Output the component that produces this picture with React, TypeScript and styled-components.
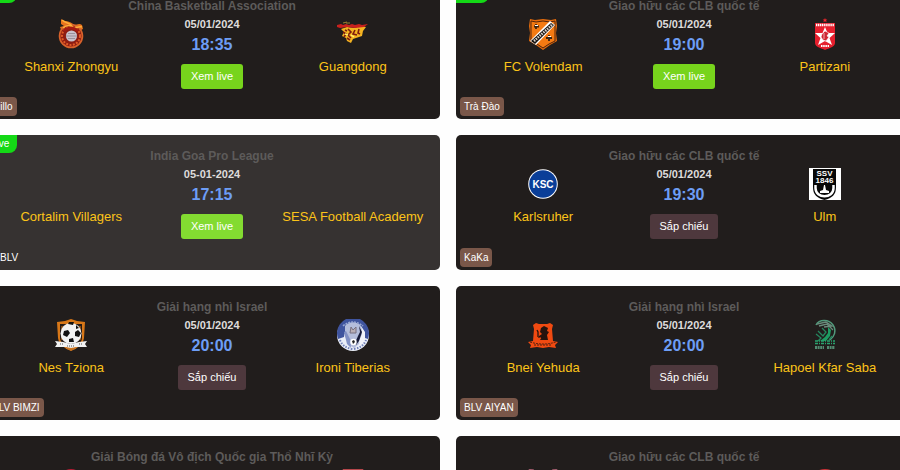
import React from "react";
import styled, { createGlobalStyle } from "styled-components";

const GlobalStyle = createGlobalStyle`
  *, *::before, *::after { box-sizing: border-box; }
  html, body { margin: 0; background: #fefefe; overflow: hidden; }
  body { font-family: "Liberation Sans", Arial, sans-serif; }
`;

const Viewport = styled.main`
  height: 100vh;
  overflow: hidden;
`;

const MatchGrid = styled.div`
  display: grid;
  grid-template-columns: repeat(2, minmax(0, 1fr));
  gap: 16px;
  margin: -15px -12px 0 -16px;
`;

const Card = styled.article<{ $active?: boolean }>`
  position: relative;
  min-height: ${(p) => (p.$active ? "135px" : "134px")};
  padding: 12px 8px;
  border-radius: 5px;
  overflow: hidden;
  background: ${(p) => (p.$active ? "#363231" : "#211d1c")};
`;

const LeagueTitle = styled.h2`
  margin: 0;
  font-size: 12px;
  line-height: 18px;
  font-weight: 700;
  text-align: center;
  color: #5d5b5a;
`;

const MatchRow = styled.div`
  display: grid;
  grid-template-columns: 36fr 28fr 36fr;
`;

const Team = styled.div`
  display: flex;
  flex-direction: column;
  align-items: center;
  gap: 8px;
  padding-top: 3px;
`;

const Crest = styled.svg`
  display: block;
  width: 32px;
  height: 32px;
`;

const TeamName = styled.span`
  font-size: 13px;
  line-height: 18px;
  white-space: nowrap;
  color: #fcc419;
`;

const Schedule = styled.div`
  display: flex;
  flex-direction: column;
  align-items: center;
`;

const MatchDate = styled.time`
  font-size: 11px;
  line-height: 18px;
  font-weight: 700;
  color: #dedcdb;
`;

const MatchTime = styled.time`
  font-size: 16px;
  line-height: 23px;
  font-weight: 700;
  color: #6d9df5;
`;

const WatchButton = styled.button<{ $live: boolean; $active?: boolean }>`
  height: 25px;
  margin: 8px 0 0;
  padding: 0 10px;
  border: 0;
  border-radius: 3px;
  font-family: inherit;
  font-size: 11px;
  line-height: 25px;
  white-space: nowrap;
  color: #fff;
  background: ${(p) => (!p.$live ? "#4e383d" : p.$active ? "#83db31" : "#77d41c")};
  cursor: pointer;
`;

const LiveTag = styled.span`
  position: absolute;
  top: 0;
  left: 0;
  padding: 0 8px 0 7px;
  border-radius: 0 0 8px 0;
  font-size: 10px;
  line-height: 18px;
  color: #fff;
  background: #14d916;
`;

const Caster = styled.span<{ $plain?: boolean }>`
  position: absolute;
  left: 4px;
  bottom: 3px;
  padding: 0 4px 0 ${(p) => (p.$plain ? "12px" : "4px")};
  border-radius: 4px;
  font-size: 10px;
  line-height: 19px;
  color: #fff;
  background: ${(p) => (p.$plain ? "transparent" : "#7a5749")};
`;

type CrestName =
  | "shanxi" | "guangdong" | "volendam" | "partizani" | "karlsruher" | "ulm"
  | "tziona" | "tiberias" | "yehuda" | "saba" | "redDisc" | "redBox" | "horns" | "redRing";

const crests: Record<CrestName, React.ReactNode> = {
  shanxi: (
    <>
      <path d="M6 1c3 3 9 1 13 6 3 0 5-2 8 0l1 4-6 3H7L5 9l4-1-3-2z" fill="#e8731d" />
      <circle cx="16" cy="18" r="12.3" fill="#d8622b" />
      <circle cx="16" cy="18" r="10.6" fill="#8e1d12" />
      <circle cx="16" cy="18" r="9" fill="none" stroke="#e05b26" strokeWidth="2" strokeDasharray="2 1.4" />
      <circle cx="16.5" cy="18" r="5.6" fill="#c9c3cd" />
      <path d="M11 18h11M13 15.5h7M13 20.5h7" stroke="#8f8791" strokeWidth=".8" />
      <path d="M7 2c4 4 8 2 10 6-4-1-7 0-9 2M20 9c3 1 4-1 7 0" fill="none" stroke="#ffae38" strokeWidth="1.5" />
      <path d="M9 13c3-4 10-4 14 0" fill="none" stroke="#a41b12" strokeWidth="2.5" />
    </>
  ),
  guangdong: (
    <>
      <path d="M4 11l6-2 7 1 7-2 5 1-3 4-1 5-6 2-3 1-2 4-4-2-1-3-4-2 2-4z" fill="#f4b321" />
      <path d="M6 14l3 2-2 3M11 11l3 3-3 3 3 3M18 12l-2 4 4 1M22 11l-1 4 2 1M10 20l3 2M8 12l2 1" fill="none" stroke="#7e1b0e" strokeWidth="1.6" />
      <path d="M0 7l4-1 2 1 3-1 3 1 3-1 3 1 4-1 3 1 6-1-4 3-9 1-8-1-7 1-3-1z" fill="#c9201d" />
      <path d="M6 5l4-1M9 5h4" stroke="#9c8330" />
      <path d="M8 16l3 1M14 17l3 2" stroke="#fff06d" strokeWidth="1.5" />
    </>
  ),
  volendam: (
    <>
      <path d="M3 1l5 1 8-1 8 1 5-1 1 7-1 7 1 8-7 4-7 5-7-5-7-4 1-8-1-7z" fill="#e66c0c" />
      <path d="M4 3l5 1 7-1 7 1 5-1v20l-6 3-6 4-6-4-6-3V3z" fill="#f47a12" stroke="#51240c" strokeWidth="1" />
      <path d="M3 23L23 3l5 4L9 27z" fill="#fff" />
      <path d="M4 23L24 5l3 2L8 26z" fill="#171310" />
      <path d="M7 23L26 6" stroke="#d8d1ca" strokeWidth="2.5" strokeDasharray="1.5 1" />
      <path d="M9 6v5M7 8.5h5M22 17v6M19 20h6" stroke="#3b2412" strokeWidth="1.8" />
      <path d="M8 7.5h3M21 18.5h3" stroke="#fff" />
    </>
  ),
  partizani: (
    <>
      <path d="M16 0l.7 1.6h1.6l-1.2 1 .5 1.6-1.6-1-1.6 1 .5-1.6-1.2-1h1.6z" fill="#ef252b" />
      <path d="M6 5h20v20c0 4-6 5-10 7-4-2-10-3-10-7z" fill="#e51f2d" />
      <path d="M7 7h18" stroke="#fff" strokeWidth="2.5" strokeDasharray="1.3 .6" />
      <path d="M16 9l2.5 6H26l-5.5 5L23 27l-7-4-7 4 2.5-7L6 15h7.5z" fill="#fff" />
      <path d="M13 16l3-3 4 2-2 3 2 1-3 4-3-1-2-3zM15 15v6" fill="#cf2733" stroke="#fff" strokeWidth=".6" />
      <path d="M12 28h8" stroke="#fff" strokeWidth="1.8" strokeDasharray="1.5 .7" />
    </>
  ),
  karlsruher: (
    <>
      <circle cx="16" cy="16" r="14.8" fill="#fff" />
      <circle cx="16" cy="16" r="13.8" fill="#0a3e98" />
      <text x="16" y="20" textAnchor="middle" fontFamily="Liberation Sans" fontSize="10" fontWeight="700" fill="#fff">KSC</text>
    </>
  ),
  ulm: (
    <>
      <path d="M0 0h32v32H0z" fill="#fff" />
      <path d="M4 1h23v18c0 8-4 11-11.5 13C8 30 4 27 4 19z" fill="#080808" />
      <text x="15.5" y="8" textAnchor="middle" fontFamily="Liberation Sans" fontSize="8" fontWeight="700" fill="#fff">SSV</text>
      <text x="15.5" y="15" textAnchor="middle" fontFamily="Liberation Sans" fontSize="8" fontWeight="700" fill="#fff">1846</text>
      <path d="M6.500 17v3c0 11 18 11 18 0v-3" fill="none" stroke="#fff" strokeWidth="2.5" />
      <path d="M15 17h1l1 5 3 1v2h-9v-2l3-1z" fill="#fff" />
    </>
  ),
  tziona: (
    <>
      <path d="M2 3l8-1 6-2 6 2 8 1-1 16c-1 7-7 10-13 13C10 29 4 26 3 19z" fill="#d77718" />
      <path d="M5 5h22v14c0 5-6 8-11 10C11 27 5 24 5 19z" fill="#261b16" />
      <path d="M7 7v14M25 7v14" stroke="#df7d1a" />
      <circle cx="16" cy="14.5" r="10.5" fill="#f2f2f2" />
      <path d="M14 3h5l-1 3-5-1zM9 12l4-1 2 3-3 4-4-2zM20 13l3-2 3 3-2 4-4-1zM21 6l3 3-3 1zM14 20l4-1 1 4h-5z" fill="#111" />
      <path d="M0 22l8 1 8 2 8-2 8-1-2 3 2 3H22l-6 1-6-1H0l2-3z" fill="#f2f2f2" />
      <path d="M5 25h3m4 2h8m4-2h3" stroke="#555" strokeDasharray="1 1" />
      <path d="M11 29l5 2 5-2" fill="none" stroke="#c47223" strokeWidth="1.5" />
    </>
  ),
  tiberias: (
    <>
      <circle cx="16" cy="16" r="16" fill="#e9edf7" />
      <path d="M1 20A16 16 0 1 1 31 20l-6-2A9 9 0 0 0 7 18z" fill="#3f549e" />
      <path d="M8 7c4-5 12-5 16 0l2 9-4 9-5 4-5-3-4-9z" fill="#b4bddb" />
      <path d="M6 7q10-8 20 0" fill="none" stroke="#9aa9d3" strokeWidth="1.5" strokeDasharray="2 1" />
      <path d="M24 7l4 6v9l-5 5-1-5 3-7z" fill="#f1f3fa" />
      <path d="M3 21q3 8 13 9 10-1 13-9" fill="none" stroke="#7180b8" strokeWidth="2" strokeDasharray="1.5 1.4" />
      <path d="M13 14l1-6 2 3 3-3v6z" fill="#b8aeb5" stroke="#777080" />
      <path d="M22 7l3 6-3 9-3 4-1-2 3-7 2-4z" fill="#171b38" />
      <path d="M7 13l3 12 4 4-1-9-4-8z" fill="#8190c4" />
      <circle cx="16.5" cy="23" r="3.2" fill="#fff" />
      <path d="M15 22l2-1 1 2-2 2z" fill="#222" />
    </>
  ),
  yehuda: (
    <>
      <path d="M6 6l3-2 3 1h8l3-1 3 2-1 4 1 12 5 1-3 3 1 3-7-1-6 1-6-1-7 1 1-3-3-3 5-1L7 10z" fill="#f04a11" />
      <path d="M14 9l3-2 4 2-1 3 2 1-2 3 1 5h-8l2-3-4 1 1-2 3-2-2-2z" fill="#26130e" />
      <path d="M11 18v-5l-1-2M14 19l4-3" fill="none" stroke="#26130e" strokeWidth="1.3" />
      <path d="M3 23q13 4 26 0M7 26h18" fill="none" stroke="#512010" strokeDasharray="2 1" />
    </>
  ),
  saba: (
    <>
      <path d="M7 6c3-6 13-6 17 0 4 6 1 12-3 15" fill="none" stroke="#51997b" strokeWidth="1.5" />
      <path d="M8 5l9-2 6 4-8 1M10 7l8-2 6 6" fill="none" stroke="#698a7b" strokeWidth="1.3" />
      <path d="M19 8l3 3-1 6-4 5h-6l5-4 3-4z" fill="#1d9c62" />
      <path d="M13 9l4 4-3 4-5-5M7 15l5 4-3 3M23 17l-3 4" fill="none" stroke="#24865e" strokeWidth="1.3" />
      <path d="M6 22h20M6 24.500h20" stroke="#28a36d" strokeWidth="1.6" strokeDasharray="3 1 1 1" />
      <path d="M6 28.500h9m3 0h8" stroke="#528b71" strokeWidth="3" strokeDasharray="2 .6" />
    </>
  ),
  redDisc: <ellipse cx="16" cy="16" rx="14" ry="16" fill="#b61d34" />,
  redBox: <path d="M6 .5h20v29H6z" fill="#f3dfe0" stroke="#b6474b" />,
  horns: <path d="M2 0l5 1 5 6h8l5-6 5-1-5 13-9 16-9-16z" fill="#d9cbcc" stroke="#985363" />,
  redRing: <circle cx="16" cy="16" r="15" fill="#f3dfe0" stroke="#c93237" strokeWidth="2" />,
};

interface Side {
  name: string;
  crest?: CrestName;
}

interface Match {
  league: string;
  date: string;
  time: string;
  home: Side;
  away: Side;
  live: boolean;
  tag?: boolean;
  active?: boolean;
  caster?: string;
}

const friendly = "Giao hữu các CLB quốc tế";
const israel = "Giải hạng nhì Israel";
const day = "05/01/2024";

const matches: Match[] = [
  { league: "China Basketball Association", date: day, time: "18:35", home: { name: "Shanxi Zhongyu", crest: "shanxi" }, away: { name: "Guangdong", crest: "guangdong" }, live: true, tag: true, caster: "Millo" },
  { league: friendly, date: day, time: "19:00", home: { name: "FC Volendam", crest: "volendam" }, away: { name: "Partizani", crest: "partizani" }, live: true, tag: true, caster: "Trà Đào" },
  { league: "India Goa Pro League", date: "05-01-2024", time: "17:15", home: { name: "Cortalim Villagers" }, away: { name: "SESA Football Academy" }, live: true, tag: true, active: true, caster: "BLV" },
  { league: friendly, date: day, time: "19:30", home: { name: "Karlsruher", crest: "karlsruher" }, away: { name: "Ulm", crest: "ulm" }, live: false, caster: "KaKa" },
  { league: israel, date: day, time: "20:00", home: { name: "Nes Tziona", crest: "tziona" }, away: { name: "Ironi Tiberias", crest: "tiberias" }, live: false, caster: "BLV BIMZI" },
  { league: israel, date: day, time: "20:00", home: { name: "Bnei Yehuda", crest: "yehuda" }, away: { name: "Hapoel Kfar Saba", crest: "saba" }, live: false, caster: "BLV AIYAN" },
  { league: "Giải Bóng đá Vô địch Quốc gia Thổ Nhĩ Kỳ", date: "", time: "", home: { name: "", crest: "redDisc" }, away: { name: "", crest: "redBox" }, live: false },
  { league: friendly, date: "", time: "", home: { name: "", crest: "horns" }, away: { name: "", crest: "redRing" }, live: false },
];

function TeamBlock({ side }: { side: Side }) {
  return (
    <Team>
      <Crest viewBox="0 0 32 32" aria-hidden="true">{side.crest && crests[side.crest]}</Crest>
      <TeamName>{side.name}</TeamName>
    </Team>
  );
}

function MatchCard({ match }: { match: Match }) {
  return (
    <Card $active={match.active}>
      <LeagueTitle>{match.league}</LeagueTitle>
      <MatchRow>
        <TeamBlock side={match.home} />
        <Schedule>
          {match.date && (
            <>
              <MatchDate>{match.date}</MatchDate>
              <MatchTime>{match.time}</MatchTime>
              <WatchButton type="button" $live={match.live} $active={match.active}>
                {match.live ? "Xem live" : "Sắp chiếu"}
              </WatchButton>
            </>
          )}
        </Schedule>
        <TeamBlock side={match.away} />
      </MatchRow>
      {match.tag && <LiveTag>Live</LiveTag>}
      {match.caster && <Caster $plain={match.active}>{match.caster}</Caster>}
    </Card>
  );
}

export default function App() {
  return (
    <>
      <GlobalStyle />
      <Viewport>
        <MatchGrid>
          {matches.map((match, i) => (
            <MatchCard key={i} match={match} />
          ))}
        </MatchGrid>
      </Viewport>
    </>
  );
}
